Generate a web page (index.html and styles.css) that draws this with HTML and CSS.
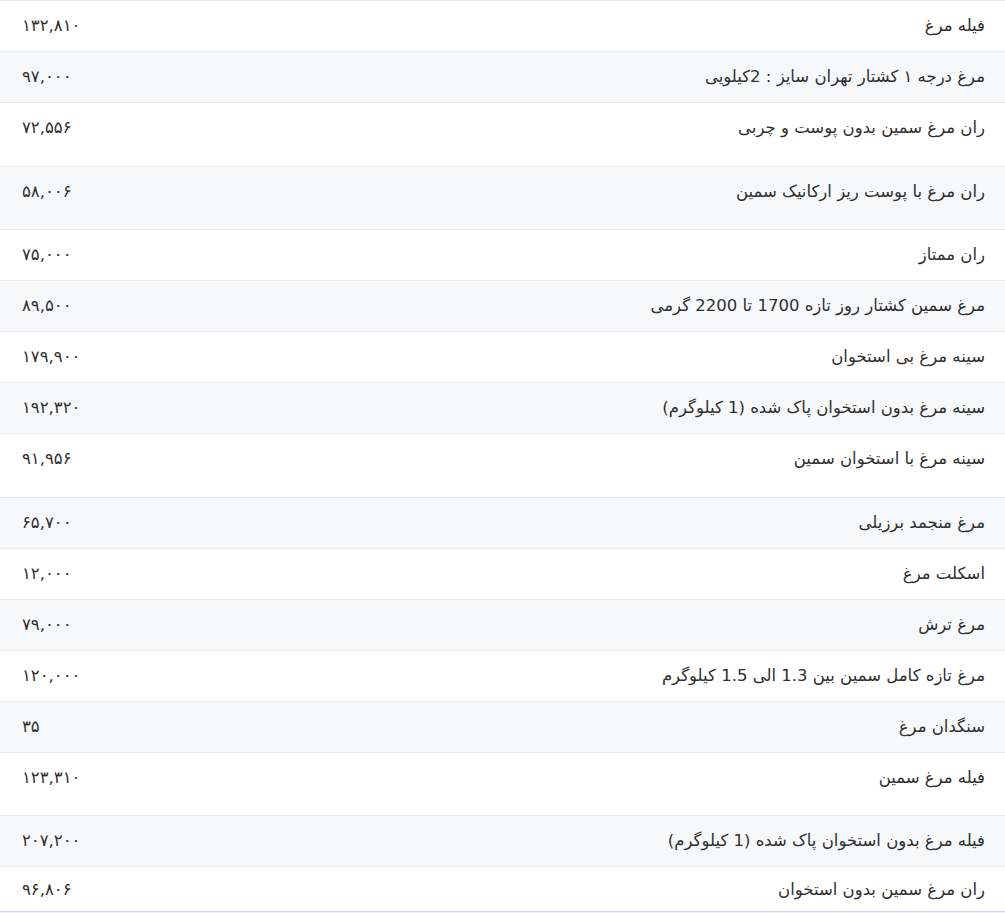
FILE: index.html
```html
<!DOCTYPE html>
<html lang="fa" dir="rtl">
<head>
<meta charset="utf-8">
<title>قیمت مرغ</title>
<link rel="stylesheet" href="styles.css">
</head>
<body>
<div class="frame">
<table class="prices">
<tbody>
<tr><td class="name">فیله مرغ</td><td class="price">۱۳۲,۸۱۰</td></tr>
<tr><td class="name">مرغ درجه ۱ کشتار تهران سایز : 2کیلویی</td><td class="price">۹۷,۰۰۰</td></tr>
<tr class="tall"><td class="name">ران مرغ سمین بدون پوست و چربی</td><td class="price">۷۲,۵۵۶</td></tr>
<tr class="tall"><td class="name">ران مرغ با پوست ریز ارکانیک سمین</td><td class="price">۵۸,۰۰۶</td></tr>
<tr><td class="name">ران ممتاز</td><td class="price">۷۵,۰۰۰</td></tr>
<tr><td class="name">مرغ سمین کشتار روز تازه 1700 تا 2200 گرمی</td><td class="price">۸۹,۵۰۰</td></tr>
<tr><td class="name">سینه مرغ بی استخوان</td><td class="price">۱۷۹,۹۰۰</td></tr>
<tr><td class="name">سینه مرغ بدون استخوان پاک شده (1 کیلوگرم)</td><td class="price">۱۹۲,۳۲۰</td></tr>
<tr class="tall"><td class="name">سینه مرغ با استخوان سمین</td><td class="price">۹۱,۹۵۶</td></tr>
<tr><td class="name">مرغ منجمد برزیلی</td><td class="price">۶۵,۷۰۰</td></tr>
<tr><td class="name">اسکلت مرغ</td><td class="price">۱۲,۰۰۰</td></tr>
<tr><td class="name">مرغ ترش</td><td class="price">۷۹,۰۰۰</td></tr>
<tr><td class="name">مرغ تازه کامل سمین بین 1.3 الی 1.5 کیلوگرم</td><td class="price">۱۲۰,۰۰۰</td></tr>
<tr><td class="name">سنگدان مرغ</td><td class="price">۳۵</td></tr>
<tr class="tall"><td class="name">فیله مرغ سمین</td><td class="price">۱۲۳,۳۱۰</td></tr>
<tr><td class="name">فیله مرغ بدون استخوان پاک شده (1 کیلوگرم)</td><td class="price">۲۰۷,۲۰۰</td></tr>
<tr class="last"><td class="name">ران مرغ سمین بدون استخوان</td><td class="price">۹۶,۸۰۶</td></tr>
</tbody>
</table>
</div>
</body>
</html>
```
FILE: styles.css
```css
html, body {
  margin: 0;
  padding: 0;
  background: #eef1f8;
}

body {
  font-family: "DejaVu Sans", "Noto Sans", sans-serif;
  font-size: 16.5px;
  color: #2f2f2f;
}

.frame {
  height: 910px;
  overflow: hidden;
  background: #ffffff;
  border-top: 1px solid #e4ebf4;
  border-bottom: 1px solid #c9d1ea;
}

.prices {
  width: 100%;
  border-collapse: collapse;
  direction: rtl;
}

.prices td {
  padding: 12px 20px 12px 22px;
  line-height: 26px;
  vertical-align: top;
  border-bottom: 1px solid #e8eaed;
}

.prices tr:nth-child(even) td {
  background: #f7f8fa;
}

.prices tr.tall td {
  padding-bottom: 24.5px;
}

.prices tr.last td {
  padding-top: 10px;
  border-bottom: none;
}

.name {
  text-align: right;
}

.price {
  text-align: left;
  white-space: nowrap;
  width: 1%;
}
```
